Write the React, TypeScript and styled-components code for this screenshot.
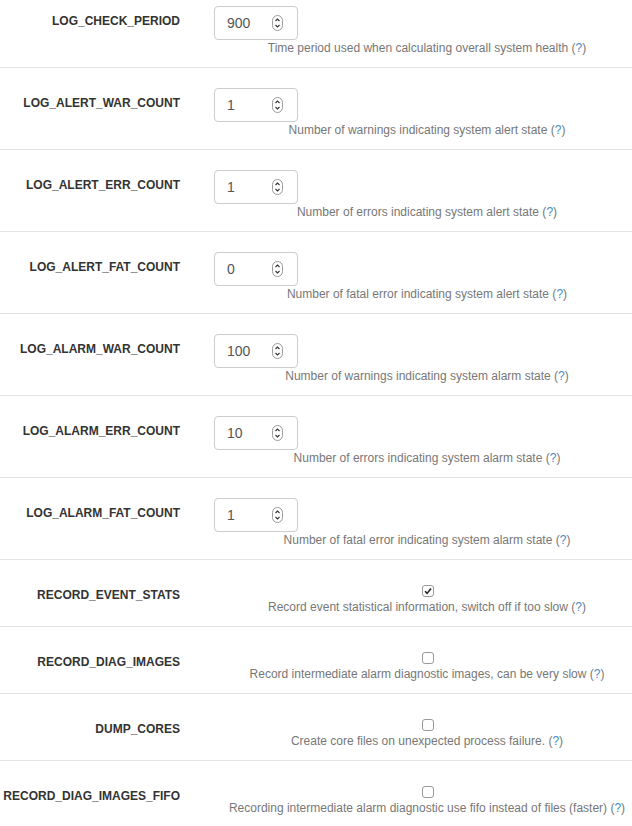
import React from "react";
import styled, { createGlobalStyle } from "styled-components";

const Global = createGlobalStyle`
  html, body { margin: 0; padding: 0; background: #fff; overflow-x: hidden; }
  body { font-family: "Liberation Sans", Arial, Helvetica, sans-serif; color: #333; }
`;

const Table = styled.div`
  width: 640px;
`;

const Row = styled.div`
  display: grid;
  grid-template-columns: 196px 1fr;
  border-top: 1px solid #e3e3e3;
  &:first-child { border-top: none; }
`;

const LabelCell = styled.div`
  padding: 28px 16px 0 0;
  text-align: right;
  font-weight: bold;
  font-size: 12px;
  line-height: 14px;
  color: #333;
  ${Row}:first-child & { padding-top: 14px; }
`;

const ValueCell = styled.div<{ $check?: boolean }>`
  padding: ${(p) => (p.$check ? "25px 0 12px 18px" : "20px 0 12px 18px")};
  display: flex;
  flex-direction: column;
  ${Row}:first-child & { padding-top: ${(p) => (p.$check ? "10px" : "6px")}; }
`;

const NumberBox = styled.div`
  box-sizing: border-box;
  width: 84px;
  height: 34px;
  border: 1px solid #ccc;
  border-radius: 4px;
  display: flex;
  align-items: center;
  padding: 0 14px 0 12px;
  font-size: 14px;
  color: #555;
`;

const NumberValue = styled.span`
  flex: 1;
`;

const CheckWrap = styled.div`
  display: flex;
  justify-content: center;
  height: 13px;
  padding-left: 1px;
`;

const CheckBox = styled.span`
  box-sizing: border-box;
  width: 12px;
  height: 12px;
  border: 1px solid #9a9a9a;
  border-radius: 3px;
  background: #fff;
  display: flex;
  align-items: center;
  justify-content: center;
`;

const Help = styled.div<{ $check?: boolean }>`
  margin-top: ${(p) => (p.$check ? "2px" : "1px")};
  text-align: center;
  font-size: 12px;
  line-height: 14px;
  color: #777;
  white-space: nowrap;
`;

const Q = styled.a`
  color: #428bca;
  text-decoration: none;
`;

const Spinner = () => (
  <svg width="11" height="16" viewBox="0 0 11 16">
    <rect x="0.5" y="0.5" width="10" height="15" rx="5" fill="#fff" stroke="#9a9a9a" />
    <path d="M3.5 6 L5.5 4 L7.5 6" fill="none" stroke="#333" strokeWidth="1.1" />
    <path d="M3.5 10 L5.5 12 L7.5 10" fill="none" stroke="#333" strokeWidth="1.1" />
  </svg>
);

const Tick = () => (
  <svg width="10" height="10" viewBox="0 0 10 10">
    <path d="M2 5.2 L4.1 7.4 L8 2.4" fill="none" stroke="#222" strokeWidth="1.6" />
  </svg>
);

type Item = { name: string; value?: string; checked?: boolean; help: string };

const items: Item[] = [
  { name: "LOG_CHECK_PERIOD", value: "900", help: "Time period used when calculating overall system health" },
  { name: "LOG_ALERT_WAR_COUNT", value: "1", help: "Number of warnings indicating system alert state" },
  { name: "LOG_ALERT_ERR_COUNT", value: "1", help: "Number of errors indicating system alert state" },
  { name: "LOG_ALERT_FAT_COUNT", value: "0", help: "Number of fatal error indicating system alert state" },
  { name: "LOG_ALARM_WAR_COUNT", value: "100", help: "Number of warnings indicating system alarm state" },
  { name: "LOG_ALARM_ERR_COUNT", value: "10", help: "Number of errors indicating system alarm state" },
  { name: "LOG_ALARM_FAT_COUNT", value: "1", help: "Number of fatal error indicating system alarm state" },
  { name: "RECORD_EVENT_STATS", checked: true, help: "Record event statistical information, switch off if too slow" },
  { name: "RECORD_DIAG_IMAGES", checked: false, help: "Record intermediate alarm diagnostic images, can be very slow" },
  { name: "DUMP_CORES", checked: false, help: "Create core files on unexpected process failure." },
  { name: "RECORD_DIAG_IMAGES_FIFO", checked: false, help: "Recording intermediate alarm diagnostic use fifo instead of files (faster)" },
];

export default function App() {
  return (
    <>
      <Global />
      <Table>
        {items.map((it) => {
          const isCheck = it.value === undefined;
          return (
            <Row key={it.name}>
              <LabelCell>{it.name}</LabelCell>
              <ValueCell $check={isCheck}>
                {isCheck ? (
                  <CheckWrap>
                    <CheckBox>{it.checked && <Tick />}</CheckBox>
                  </CheckWrap>
                ) : (
                  <NumberBox>
                    <NumberValue>{it.value}</NumberValue>
                    <Spinner />
                  </NumberBox>
                )}
                <Help $check={isCheck}>
                  {it.help} (<Q href="#">?</Q>)
                </Help>
              </ValueCell>
            </Row>
          );
        })}
      </Table>
    </>
  );
}
